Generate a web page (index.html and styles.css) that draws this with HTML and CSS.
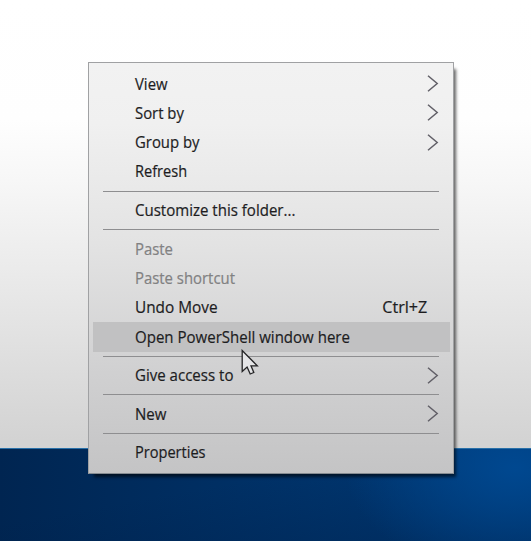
FILE: index.html
```html
<!DOCTYPE html>
<html lang="en">
<head>
<meta charset="utf-8">
<title>Desktop</title>
<link rel="stylesheet" href="styles.css">
</head>
<body>
<svg class="defs" aria-hidden="true">
  <symbol id="chevron" viewBox="0 0 12 18"><path d="M1 .7 10.2 8.5 1 16.3"/></symbol>
</svg>
<main class="desktop">
  <div class="wallpaper"></div>
  <nav class="menu">
    <div class="item"><span class="label">View</span><svg class="arrow"><use href="#chevron"/></svg></div>
    <div class="item"><span class="label">Sort by</span><svg class="arrow"><use href="#chevron"/></svg></div>
    <div class="item"><span class="label">Group by</span><svg class="arrow"><use href="#chevron"/></svg></div>
    <div class="item"><span class="label tight">Refresh</span></div>
    <div class="separator"></div>
    <div class="item"><span class="label wide">Customize this folder...</span></div>
    <div class="separator"></div>
    <div class="item disabled"><span class="label">Paste</span></div>
    <div class="item disabled"><span class="label">Paste shortcut</span></div>
    <div class="item"><span class="label wider">Undo Move</span><span class="shortcut">Ctrl+Z</span></div>
    <div class="item selected"><span class="label wide">Open PowerShell window here</span></div>
    <div class="separator"></div>
    <div class="item"><span class="label wide">Give access to</span><svg class="arrow"><use href="#chevron"/></svg></div>
    <div class="separator"></div>
    <div class="item"><span class="label wide">New</span><svg class="arrow"><use href="#chevron"/></svg></div>
    <div class="separator"></div>
    <div class="item"><span class="label tight">Properties</span></div>
  </nav>
  <svg class="cursor" viewBox="0 0 18 27"><path d="M1.2 1.5V22.5L6.1 18 9.2 25 12.8 23.5 10 16.8H16.3Z"/></svg>
</main>
</body>
</html>
```
FILE: styles.css
```css
* { box-sizing: border-box; }
body { margin: 0; }
.defs { position: absolute; width: 0; height: 0; }
.desktop {
  position: relative;
  width: 531px;
  height: 541px;
  padding: 62px 0 0 88px;
  overflow: hidden;
  background: linear-gradient(#fff 0, #fefefe 120px, #f7f7f7 180px, #e8e8e8 290px, #d3d3d3 440px);
  font: 15.5px/29px "Open Sans", "Noto Sans", sans-serif;
  color: #1d1d1f;
}
.wallpaper {
  position: absolute;
  inset: 448px 0 0;
  border-top: 1px solid #2870a8;
  background:
    radial-gradient(ellipse 170px 110px at 97% 20%, #004890, rgba(0, 72, 144, 0)),
    linear-gradient(170deg, rgba(0, 48, 100, 0) 40%, rgba(0, 30, 70, .45)),
    linear-gradient(90deg, #002551, #003065 45%, #003d7c);
}
.menu {
  position: relative;
  width: 366px;
  height: 412px;
  padding: 6.4px 3.5px 5px;
  border: 1px solid #a0a1a3;
  border-bottom-color: #858b91;
  background: linear-gradient(#f2f2f2 0, #f0f0f0 60px, #e3e3e3 180px, #d0d0d1 310px, #c4c4c5 100%);
  box-shadow: 4px 5px 3px -2px rgba(0, 0, 0, .6);
}
.item {
  display: flex;
  align-items: center;
  justify-content: space-between;
  height: 29.3px;
  padding: 0 11px 0 42.5px;
  white-space: nowrap;
}
.label, .shortcut { -webkit-text-stroke: .2px currentColor; }
.label { transform: scaleX(.96); transform-origin: left; }
.label.wide { transform: scaleX(.97); }
.label.wider { transform: scaleX(.99); }
.label.tight { transform: scaleX(.94); }
.shortcut { margin-right: 11.5px; transform: scaleX(1.04); transform-origin: right; }
.disabled { color: #818182; }
.selected { background: #c1c1c2; }
.separator {
  height: 9.3px;
  margin: 0 10.5px;
  background: linear-gradient(#8e8e90, #8e8e90) center / 100% 1px no-repeat;
}
.arrow { width: 12px; height: 18px; fill: none; stroke: #626068; stroke-width: 1.5; }
.cursor {
  position: absolute;
  left: 241px;
  top: 349px;
  width: 18px;
  height: 27px;
  fill: #e5e5e7;
  stroke: #242426;
  stroke-width: 1.3;
}
```
